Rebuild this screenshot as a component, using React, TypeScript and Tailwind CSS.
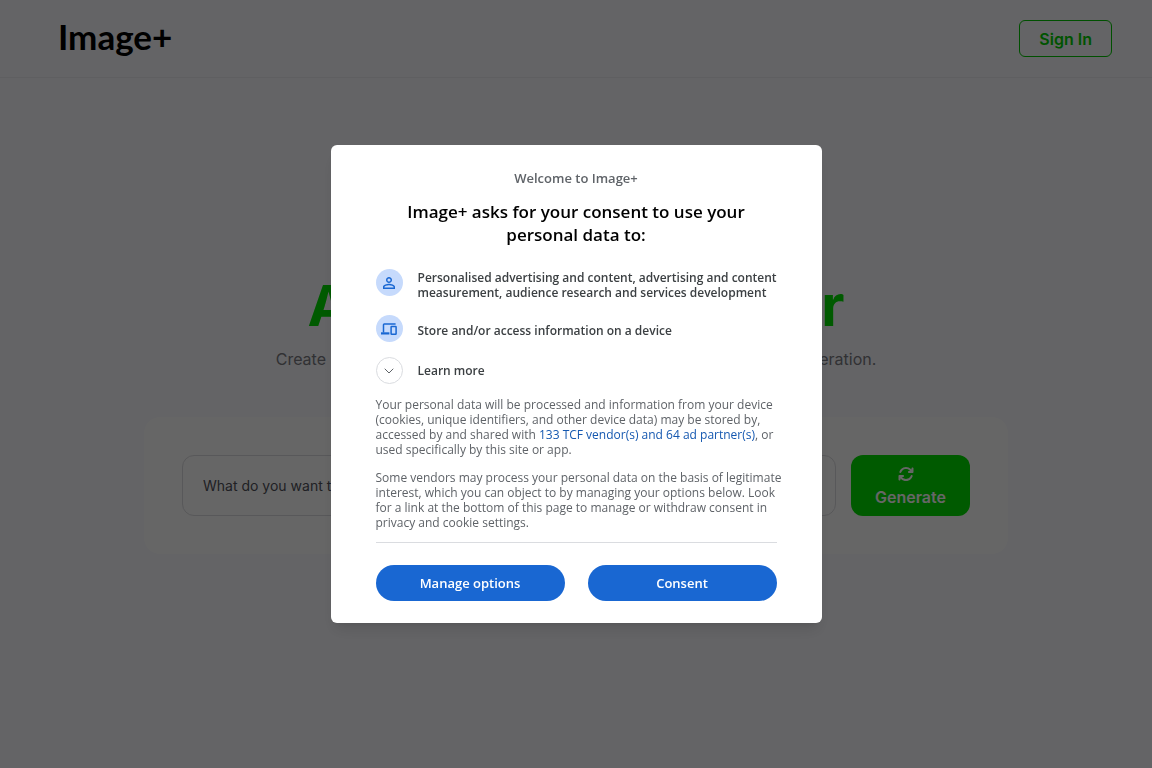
import { ChevronDown } from "lucide-react";
import { FaArrowsRotate } from "react-icons/fa6";
import { MdPersonOutline } from "react-icons/md";

const DevicesIcon = ({ className }: { className?: string }) => (
  <svg viewBox="0 0 16 16" fill="none" stroke="currentColor" strokeWidth="1.5" className={className}>
    <path d="M14.6 2.9H3.3a.8.8 0 0 0-.8.8v7.8" />
    <path d="M0 12.4h8.4" strokeWidth="2.2" />
    <rect x="10.1" y="5.4" width="5" height="7.9" rx=".6" />
  </svg>
);

const Header = () => (
  <header className="flex items-center justify-between border-b border-[#ededf2] px-10 py-5">
    <a href="#" className="pb-[5px] pl-[18px] font-['Lato'] text-[35px] leading-8 font-bold text-black">
      Image+
    </a>
    <button
      type="button"
      className="h-[37px] rounded-md border border-[#00c800] px-[19px] text-base font-semibold text-[#00d000]"
    >
      Sign In
    </button>
  </header>
);

const Generator = () => (
  <main className="flex flex-col items-center pt-[191px]">
    <h1 className="text-[57px] leading-[74px] font-bold text-[#00e000]">AI Image Generator</h1>
    <p className="mt-1 text-base leading-6 text-[#7a7b82]">
      Create stunning and unique images in seconds with the power of AI generation.
    </p>
    <form
      className="mt-[46px] flex w-3/4 gap-[15px] rounded-2xl bg-white p-[38px]"
      onSubmit={(e) => e.preventDefault()}
    >
      <input
        type="text"
        aria-label="Prompt"
        placeholder="What do you want to see?"
        className="min-w-0 flex-1 rounded-xl border border-[#dcdce0] px-5 text-sm placeholder:text-[#50525a]"
      />
      <button
        type="submit"
        className="flex flex-col items-center gap-1 rounded-xl bg-[#00e000] px-6 pt-[11px] pb-2 text-base leading-[22px] font-semibold text-white"
      >
        <FaArrowsRotate className="mr-2 size-4" />
        Generate
      </button>
    </form>
  </main>
);

const purposes = [
  {
    icon: <MdPersonOutline className="size-[18px]" />,
    text: "Personalised advertising and content, advertising and content measurement, audience research and services development",
  },
  {
    icon: <DevicesIcon className="size-4" />,
    text: "Store and/or access information on a device",
  },
];

const ConsentDialog = () => (
  <div className="fixed inset-0 flex items-center justify-center bg-black/60 font-['Open_Sans',sans-serif]">
    <div
      role="dialog"
      aria-modal="true"
      aria-labelledby="consent-title"
      className="w-full max-w-[491px] rounded-md bg-white px-[45px] pt-6 pb-[22px] text-xs leading-[15px] text-[#5f6368] shadow-lg"
    >
      <p className="text-center text-[13px] leading-[18px] font-semibold">Welcome to Image+</p>
      <h2
        id="consent-title"
        className="mt-[13px] px-5 text-center text-[17px] leading-[23px] font-semibold text-black"
      >
        Image+ asks for your consent to use your personal data to:
      </h2>

      <ul className="mt-[23px] -mr-4 space-y-[15px] font-semibold text-[#3c4043]">
        {purposes.map(({ icon, text }) => (
          <li key={text} className="flex gap-[15px]">
            <span className="flex size-[27px] shrink-0 items-center justify-center rounded-full bg-[#c6dafc] text-[#1967d2]">
              {icon}
            </span>
            <span className="flex min-h-[31px] items-center">{text}</span>
          </li>
        ))}
      </ul>
      <button
        type="button"
        className="mt-[11px] flex items-center gap-[15px] font-semibold text-[#3c4043]"
      >
        <span className="flex size-[27px] items-center justify-center rounded-full border border-[#dadce0] text-[#5f6368]">
          <ChevronDown className="size-4" strokeWidth={1.5} />
        </span>
        Learn more
      </button>

      <p className="mt-[13px] -mr-2">
        Your personal data will be processed and information from your device (cookies, unique
        identifiers, and other device data) may be stored by, accessed by and shared with{" "}
        <a href="#" className="font-medium text-[#1558b0]">
          133 TCF vendor(s) and 64 ad partner(s)
        </a>
        , or used specifically by this site or app.
      </p>
      <p className="mt-[13px] -mr-2">
        Some vendors may process your personal data on the basis of legitimate interest, which you
        can object to by managing your options below. Look for a link at the bottom of this page to
        manage or withdraw consent in privacy and cookie settings.
      </p>

      <div className="mt-3 flex gap-[23px] border-t border-[#dadce0] pt-[22px] text-[13px] font-semibold text-white">
        <button type="button" className="h-9 flex-1 rounded-full bg-[#1967d2]">
          Manage options
        </button>
        <button type="button" className="h-9 flex-1 rounded-full bg-[#1967d2]">
          Consent
        </button>
      </div>
    </div>
  </div>
);

export default function App() {
  return (
    <div className="min-h-screen bg-[#fafaff] font-['Inter',sans-serif]">
      <Header />
      <Generator />
      <ConsentDialog />
    </div>
  );
}
